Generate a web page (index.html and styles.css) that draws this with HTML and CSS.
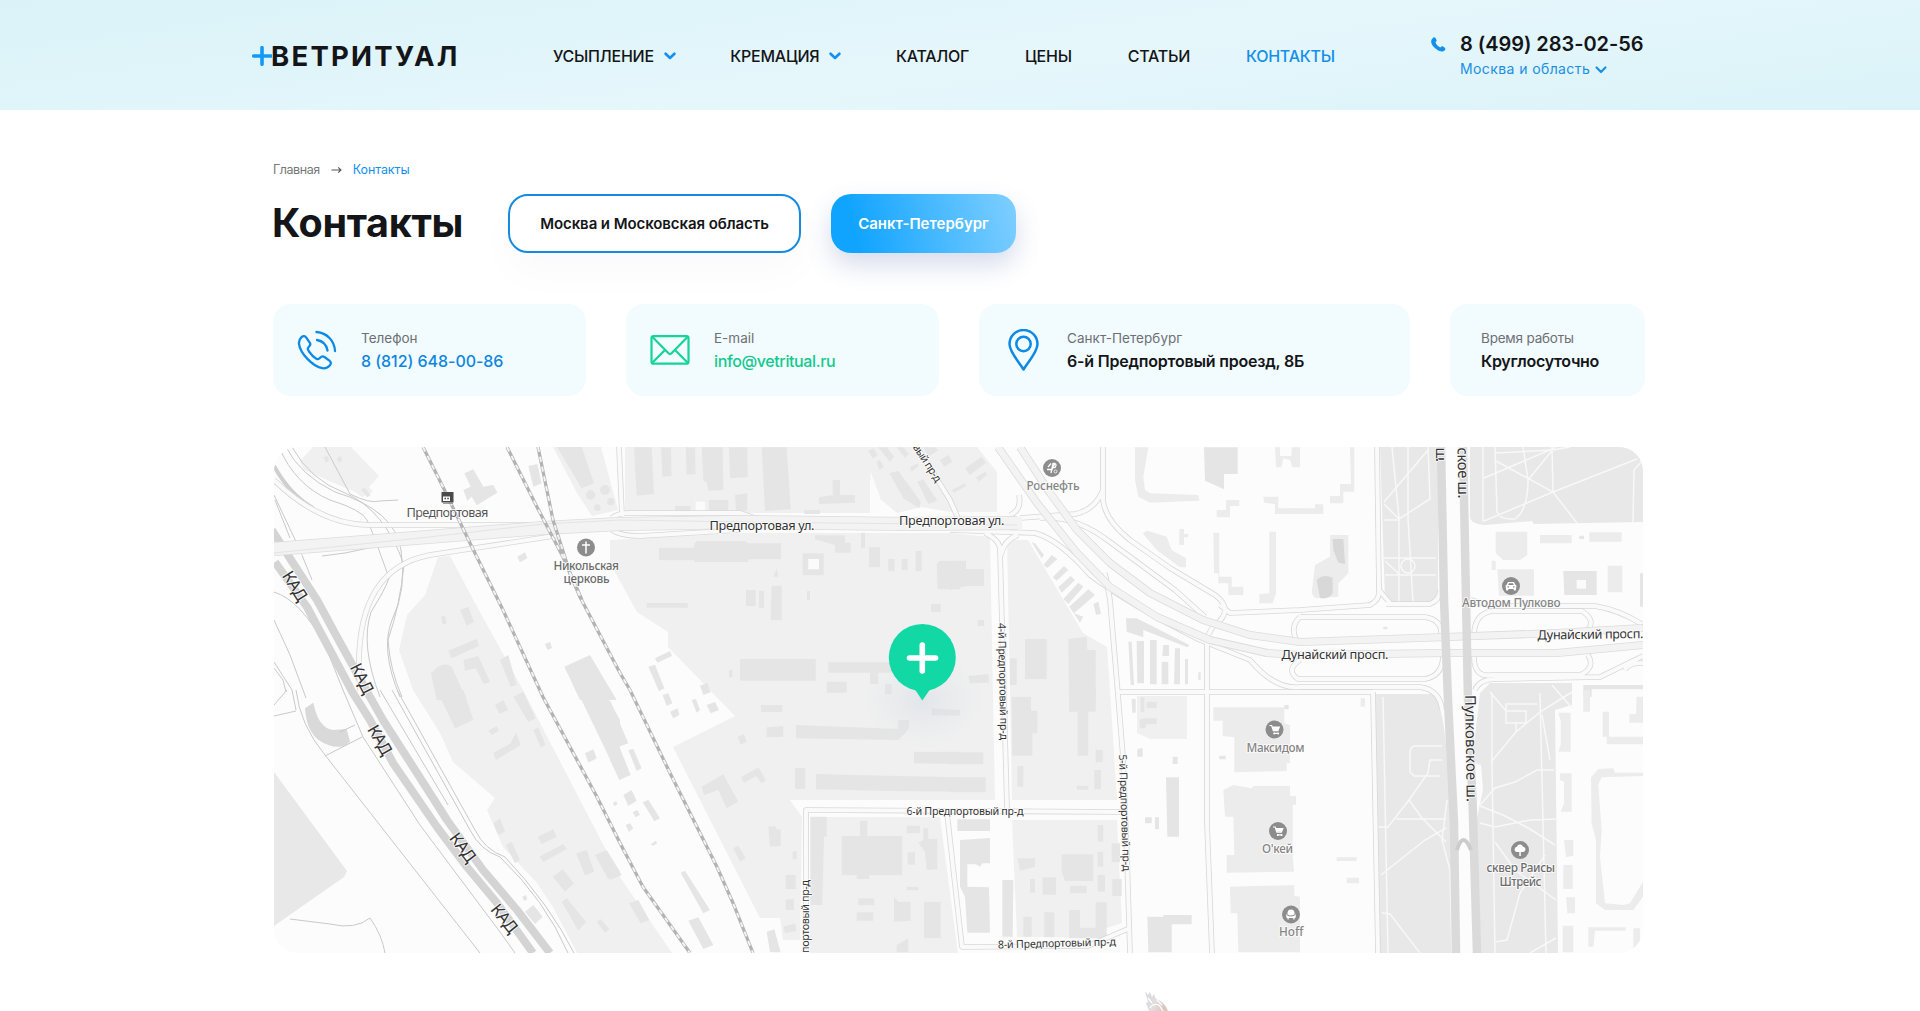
FILE: index.html
```html
<!DOCTYPE html>
<html lang="ru">
<head>
<meta charset="utf-8">
<title>Контакты — Ветритуал</title>
<link rel="stylesheet" href="styles.css">
</head>
<body>
<header class="header">
  <div class="header-inner">
    <a class="logo"><svg width="20" height="20" viewBox="0 0 20 20"><path d="M10 1.7V18.3M1.7 10H20" stroke="#1199f7" stroke-width="3.6" stroke-linecap="round"/></svg><span class="logo-text">ВЕТРИТУАЛ</span></a>
    <nav class="nav">
      <a class="has-menu">УСЫПЛЕНИЕ<svg class="chev" viewBox="0 0 12 8"><path d="M1.6 1.7 6 6 10.4 1.7"/></svg></a>
      <a class="has-menu">КРЕМАЦИЯ<svg class="chev" viewBox="0 0 12 8"><path d="M1.6 1.7 6 6 10.4 1.7"/></svg></a>
      <a>КАТАЛОГ</a>
      <a>ЦЕНЫ</a>
      <a>СТАТЬИ</a>
      <a class="active">КОНТАКТЫ</a>
    </nav>
    <div class="phone">
      <svg class="phone-icon" viewBox="0 0 15 15"><path d="M2.2.8C3.4-.2 4.300.5 5.300 2.400c.6 1.200.4 1.700-.8 2.900C5.200 7.600 7 9.500 9.300 10.500c1.200-1.300 1.900-1.500 3-.8 1.900 1.100 2.700 2 1.600 3.300-1.600 2-4.200 2.100-7.400.100C2.300 10.400-.2 7 .2 4.200.4 2.600 1 1.800 2.200.8Z" fill="#1490ea"/></svg>
      <div class="phone-body">
        <div class="phone-num">8 (499) 283-02-56</div>
        <div class="phone-city">Москва и область<svg class="chev small" viewBox="0 0 12 8"><path d="M1.600 1.500 6 6 10.400 1.500"/></svg></div>
      </div>
    </div>
  </div>
</header>
<main class="main">
  <div class="crumbs"><span class="crumb-home">Главная</span><svg width="11" height="8" viewBox="0 0 11 8"><path d="M.5 4H10M7.200 1.300 10 4 7.200 6.700" fill="none" stroke="#555" stroke-width="1.100"/></svg><span class="crumb-cur">Контакты</span></div>
  <div class="title-row">
    <h1>Контакты</h1>
    <button class="btn outline">Москва и Московская область</button>
    <button class="btn filled">Санкт-Петербург</button>
  </div>
  <section class="cards">
    <div class="card c1">
      <svg width="40" height="40" viewBox="0 0 40 40" fill="none" stroke="#0d8ae6" stroke-width="2.300" stroke-linecap="round" stroke-linejoin="round"><path d="M4.500 7.200C6.200 5.500 8 5.800 9.300 7.600l3.600 5.200c.9 1.400.4 2.500-.8 3.700-2 2-1.600 2.700 0 5.200 2 3 4.500 5.500 7.200 7 1.600.9 2.400.6 3.900-1 1.400-1.500 2.700-1.800 4.200-.7l5 3.700c1.900 1.500 1.900 3 .4 4.700-1.800 2.300-4.300 3.300-7.500 2.800C15.500 36.500 3.200 23.200 2 13.800c-.3-2.900.8-5 2.500-6.600Z"/><path d="M19.500 2C30 3 37.500 10.500 38 21M20 10c5.700 1 9.500 4.800 10.500 10.500"/></svg>
      <div class="card-text"><div class="label">Телефон</div><div class="value blue">8 (812) 648-00-86</div></div>
    </div>
    <div class="card c2">
      <svg width="40" height="30" viewBox="0 0 40 30" fill="none" stroke="#15d39a" stroke-width="2.200" stroke-linejoin="round"><rect x="1.500" y="1.200" width="37" height="27.500" rx="2"/><path d="M2.500 2 18.500 18.300q1.500 1.500 3 0L37.500 2M2.500 27.500 15 15M37.500 27.500 25 15"/></svg>
      <div class="card-text"><div class="label">E-mail</div><div class="value green">info@vetritual.ru</div></div>
    </div>
    <div class="card c3">
      <svg width="31" height="42" viewBox="0 0 31 42" fill="none" stroke="#0d8ae6" stroke-width="2.500" stroke-linejoin="round"><path d="M15.500 40.500C10 31.500 1.500 23 1.500 15a14 14 0 0 1 28 0c0 8-8.500 16.500-14 25.500Z"/><circle cx="15.500" cy="15" r="7.200"/></svg>
      <div class="card-text"><div class="label">Санкт-Петербург</div><div class="value">6-й Предпортовый проезд, 8Б</div></div>
    </div>
    <div class="card c4">
      <div class="card-text"><div class="label">Время работы</div><div class="value">Круглосуточно</div></div>
    </div>
  </section>
  <svg class="map" viewBox="274 447 1369 506">
    <defs>
      <g id="cart"><circle r="9" class="poi"/><path d="M-5-4h2.200l1.600 5.200h4.600l1.400-3.700h-6.600M-1 3.800h5" fill="none" stroke="#fff" stroke-width="1.200"/><path d="M-2.300-2.500h7L3.500.800h-4.800Z" fill="#fff"/><circle cx="-.2" cy="4" r="1" fill="#fff"/><circle cx="3.600" cy="4" r="1" fill="#fff"/></g>
      <radialGradient id="haze"><stop offset="0" stop-color="#d3dae4" stop-opacity=".5"/><stop offset="1" stop-color="#dfe4ea" stop-opacity="0"/></radialGradient>
    </defs>
    <rect x="274" y="447" width="1369" height="506" fill="#fcfcfc"/>
    <!-- land parcels -->
    <g class="land">
      <path d="M438 557 450 556 475 603 523 690 620 877 672 953H577L553 907 537 883 503 847 487 810 495 798 453 762 440 733 413 690 399 650 407 615 425 595Z"/>
      <path d="M313 447H351L379 476 369 487 373 492 362 497 355 492 304 470 300 461Z"/>
      <path d="M553 447H601L618 510 592 516 577 493Z"/>
      <path d="M625 447H870V513H625Z"/>
      <path d="M863 447H977L997 472V512H950L922 507 897 513 873 493Z"/>
      <path d="M610 540 745 533 950 533 990 537 995 800H790L802 817 800 940H783L780 918H760L673 747 735 716 668 647V632L637 612 610 563Z"/>
      <path d="M1007 540H1028L1083 633 1107 647 1110 690 1117 800H1012Z"/>
      <path d="M810 817H940L958 953H810ZM1012 820H1117L1122 923 1080 937H1017ZM1137 696H1187V739H1150L1137 733Z"/>
    </g>
    <g class="park">
      <path d="M274 772 347 871 344 877 274 926Z"/>
      <path d="M1380 447H1438V596Q1436 602 1428 602H1385Z"/>
      <path d="M1470 447H1643V522L1534 524 1532 521 1485 525Q1471 524 1470 517Z"/>
      <path d="M1374 694H1433Q1444 705 1447 760L1454 823 1453 953H1380Z"/>
      <path d="M1480 693 1490 683H1572V705L1555 710 1558 953H1480L1476 823 1483 790 1481 765 1472 762Z"/>
    </g>
    <!-- buildings, first row of blocks -->
    <g class="bld" transform="translate(270 440) scale(.33333)">
      <path d="M583 100 610 88 640 140 670 135 682 158 620 196 605 170 592 182 580 150 602 140ZM775 78 802 72 815 130 790 140ZM860 20H935L972 130 935 145ZM742 350 765 337 772 355 750 367ZM570 510 595 500 612 545 590 557ZM513 530 525 527 530 550 518 554ZM535 632 620 597 627 618 545 655ZM580 660 625 648 660 725 642 733 617 685 585 692ZM690 660 715 645 740 735 722 740ZM883 680 960 645 1040 780H930ZM483 700Q515 660 545 680L590 780H500ZM825 612 840 606 846 624 832 630ZM272 148 285 144 302 165 292 172ZM160 52 172 48 178 62 168 68ZM200 55 212 48 217 62 205 68Z"/>
      <g><circle cx="1005" cy="150" r="15"/><circle cx="1022" cy="185" r="11"/><circle cx="962" cy="165" r="14"/><circle cx="982" cy="203" r="10"/></g>
    </g>
    <g class="bld" transform="translate(610 440) scale(.33333)">
      <path d="M72 22H125L132 162 80 167ZM153 22H183L185 108 157 110ZM227 22H255L257 102 230 104ZM275 22H338L340 150 295 152 290 125 280 123ZM357 22H412L413 112 360 115ZM455 22H530L542 208 465 213ZM195 198H242V216H195ZM297 180H355V216H297ZM375 165 412 160V212H378ZM668 120H690V165H735V188L627 192V172L668 165ZM583 210H630V222H583Z"/>
      <path d="M147 323H253V310L262 303H405L415 310H513V358H415V366H253V361H147ZM615 286H705V308H722V338H675V315L615 298ZM578 340H641V406H578ZM753 278H765V325H753ZM777 322H810V382H777ZM835 357H854V394H835ZM875 357H893V391H875ZM917 333H935V394H917ZM980 372 990 362H1050V448H983ZM408 450H437V498H408ZM447 452H462V503H447ZM485 437H515V541H482ZM490 410 500 385 505 410ZM591 453H600V480H591ZM110 489H233V503H110ZM963 492H992V516H963ZM390 657H617V722H390ZM655 667H860V698H805V732H780V698H655ZM650 725H710V758H650ZM825 732H845V763H825ZM357 690H367V712H357ZM135 655 180 633 186 648 142 668ZM115 680 135 674 163 745 147 754ZM270 737 292 728 302 757 280 765Z"/>
      <path d="M775 32 790 25 803 45 788 56ZM800 65 810 60 822 82 808 90ZM805 22H830L853 50 840 66ZM860 22H880L897 42 885 53ZM838 100 865 92 932 185 928 205 880 175ZM922 125 940 118 982 182 955 192ZM900 82 922 70 927 78 905 95ZM990 60 1015 45 1027 65 1002 80ZM940 22H975L985 30 955 50Z"/>
      <path class="hole" d="M595 357H627V388H595ZM257 185H285V216H257ZM782 95 810 170 813 220H780Z"/>
    </g>
    <g class="bld" transform="translate(950 440) scale(.33333)">
      <path d="M45 85 95 50 108 68 60 105ZM78 112 105 95 112 103 87 125ZM5 150 45 130 48 138 12 158ZM762 22H863V102H822V148L765 122ZM0 370 15 362H48V387H102V438H50L0 450Z"/>
      <path class="pale" d="M555 22H595L580 110 585 150 600 160 745 165 748 182 600 188 565 170 555 120ZM975 22H990V48H1025V22H1050V82H1028L1020 60 1000 55 995 82H978ZM800 210H828V180H868V198H840V232H800ZM940 170H985V205H1050V222H975V192L942 188ZM578 280 592 272 650 290 665 330 708 355V382H690L620 330ZM688 267H702V282H715V292H702V315H688ZM790 278H808V410H845V440H880V465H835V430H805V400H792ZM958 275H978V460L968 490H928V462L958 460Z"/>
      <path d="M245 307 255 310 282 345 275 355ZM280 375 305 345 322 357 292 384ZM308 412 342 378 355 390 320 422ZM325 442 362 408 375 420 335 458ZM340 477 385 428 400 440 355 492ZM358 500 415 448 435 465 372 520 400 530 390 548ZM430 492 445 485 453 522 438 524ZM83 540H102V558H83ZM225 597H290V718H225ZM355 597 410 590 412 630H437V780H357ZM180 655H200V735H180ZM55 708 115 702 117 728 60 730ZM528 535H560L718 615 712 622 580 570V592L530 575ZM535 605H545L552 735H542ZM560 603H582V730H562ZM600 600H620V733H600ZM640 615H657V648H637ZM635 665H655V733H635ZM675 625H690V733H672ZM705 657H714V733H705ZM745 697H752V720H745Z"/>
    </g>
    <g class="bld" transform="translate(1290 440) scale(.33333)">
      <path class="pale" d="M5 35 22 22V80H5ZM180 22H193V155H160V190H120V168H150V132H183ZM0 205H75V193H100V222H0ZM120 285H175V400L145 430V470L75 475 65 460 75 375 120 350ZM617 275H712V345L690 360H640L617 340ZM750 285H845V310H750ZM898 277H995V305H898ZM605 362H617V390H605ZM622 388H732V467H627ZM953 377H997V457H953Z"/>
      <path d="M820 393H920V465H823Z"/>
      <path d="M128 297H160L163 340 165 372 145 368 130 330ZM80 420Q100 400 128 413V460Q115 480 90 474Z" fill="#d8d8d8"/>
      <path class="hole" d="M860 420H888V446H860Z"/>
      <path d="M868 287H882V297H868ZM280 560H292V568H280ZM1050 400H1059V500H1050ZM880 735H1059V748H905V770H880Z"/>
    </g>
    <!-- buildings, second row of blocks -->
    <g class="bld" transform="translate(270 690) scale(.33333)">
      <path d="M105 55 130 38Q145 115 190 120L230 117 240 155Q215 180 175 165 110 145 105 55Z" fill="#d9d9d9"/>
      <path d="M500 0H580L610 90 555 115ZM675 45 700 30 715 60 688 72ZM730 20 760 5 797 85 775 96ZM655 122 680 108 687 122 665 135ZM790 120 805 112 827 165 812 172ZM670 188 722 160 738 127 752 165 678 210ZM670 400 690 385 705 425 685 435ZM707 465 725 455 750 510 735 520ZM803 440 850 418 860 440 815 462ZM808 500 880 462 890 477 820 516ZM918 490 950 480 973 545 945 556ZM975 495 1010 480 1050 545 1015 568ZM848 560 878 538 912 580 885 605ZM875 635 890 625 948 695 925 722ZM765 665 790 645 818 680 795 702ZM980 695 993 688 1018 718 1005 728ZM920 0H1000L1050 90V270ZM945 190 970 178 980 205 955 218ZM757 620 768 615 772 627 762 633ZM1028 340 1038 333 1043 343 1033 348Z"/>
    </g>
    <g class="bld" transform="translate(610 690) scale(.33333)">
      <path d="M0 30 55 160 0 180ZM0 180 30 175 62 255 28 270 0 210ZM55 180 70 177 95 235 80 243ZM158 15 175 10 187 40 170 48ZM180 65 203 55 208 75 190 85ZM245 30 258 27 270 60 260 68ZM290 45 315 36 327 60 302 70ZM383 140 402 133 410 155 392 164ZM453 45H517V66H453ZM470 112 520 108V140L470 142ZM558 105 865 117V90H897V115L880 135 865 150 558 145ZM555 233H586V297H555ZM618 252 730 255 1050 262V305L840 303 618 298ZM912 185H1050V222L912 220ZM965 55 1050 60V77L965 76ZM275 290 340 253 385 335 350 355 325 300 282 315ZM393 262 445 232 468 270 455 280 438 258 402 278ZM475 410 495 408 500 418H512V468L480 470ZM370 475 385 467 407 505 390 515ZM527 555H557V597H527ZM527 628H552V660H527ZM520 710 555 700 560 722 525 730ZM548 484H560V508H548Z"/>
      <path d="M602 380H650V440H642L637 645H602ZM695 438H750V392H772V438H877V556H778V567H740V556H695ZM890 407H930V430H890ZM893 487H915V524H893ZM940 415H955V447H982V538L950 540 945 485 925 458 940 450ZM852 620 865 635H902V692L852 695ZM745 625H793V646H745ZM740 667H790V692H740ZM942 635H992V745H942ZM860 765 895 745V787H860ZM890 590H925V601H890ZM235 692 265 682 310 765 280 777ZM212 548 225 542 300 660 280 670ZM98 337 115 329 150 385 133 394ZM40 315 65 300 80 332 55 348ZM57 640 85 630 118 690 92 700ZM68 367 82 360 90 374 77 382ZM47 405 60 400 70 415 57 426ZM470 725 493 718 512 787H480ZM0 500 35 555 0 570ZM122 463 137 452 142 460 130 467Z"/>
    </g>
    <g class="bld" transform="translate(950 690) scale(.33333)">
      <path d="M185 20H243V62H262V130H247V197H187ZM357 0H437V65H415V197H383V65H357ZM202 228H220V290H202ZM437 180H458V217H437ZM433 240H453V298H433ZM380 287H415V299H380ZM0 187H100V223H0ZM0 262H107V307H0ZM22 388H120V423H22ZM30 450 120 444V520H97L90 530 78 523H52V590L117 592 120 728H52L45 620 30 590ZM157 570H190L188 740H157ZM203 505H255V530L210 542ZM335 493H430V573H345L335 545ZM240 567H255V608H240ZM278 562H318V614H278ZM360 587H410V610H360ZM443 405H460V455H443ZM443 485H460V530H443ZM443 555H465V605H443ZM485 460H510V517H485ZM487 567H515V618H487ZM220 680H245V740H220ZM283 667H313V742H283ZM357 660H390V713H437V637H470V745H357ZM570 175H578V200H562V178ZM668 200H683V222H668ZM648 262H687V440H652ZM585 382H605V400H585ZM615 382H627V418H615ZM545 27H557V68H547ZM572 22H583V67H572ZM590 35H620V55H590ZM568 88 590 85H620V103H590L585 115H570ZM592 680H640V675H725V703H665V787H595ZM808 197H827V208H808ZM1003 45H1016V58H1003Z"/>
      <path class="pale" d="M790 52H1003V100L1020 105V220H1010V243L853 247V142L818 138V92H790ZM820 300 850 285 905 295 910 288H1020V318H1038V345H1028V495L1032 545 830 548V495H853L850 380H825ZM840 590 1033 585V617L1050 620V787H865L862 670H842Z"/>
    </g>
    <g class="bld" transform="translate(1290 690) scale(.33333)">
      <path class="pale" d="M938 65H957V140H1059V163H950V140H938ZM1040 20H1059V98H1018V72H1038ZM805 68H842V185H805L812 165V92ZM810 250H845V365H812L822 340V275L810 270ZM822 450H850V497L828 502ZM820 525H848V597H820ZM828 622H855V670H832ZM818 707H850V787H818ZM140 502H200V513H140ZM170 563H207V580H170ZM880 0H900V65H880ZM903 262 925 237 970 235 975 248H1059V258L935 262 925 285 935 420 930 500 945 640 1000 645 1020 640 1059 575V620L1030 660H945L918 640V450L905 400ZM895 712H1007V722H915L910 770H895ZM1030 715H1050V770L1030 777ZM212 25H225V50H212Z"/>
    </g>
    <!-- park paths -->
    <g class="trail">
      <path d="M1392 447 1399 518V602M1408 447V518L1413 602M1384 502 1428 450M1384 504 1399 519 1430 499 1428 447M1384 520H1400M1384 558H1436M1385 575H1436M1385 561 1400 575"/><circle cx="1408" cy="566" r="7"/>
      <path d="M1483 447V522M1495 447 1497 512Q1500 520 1515 519 1528 510 1528 480L1523 447M1484 478 1552 449M1496 461 1553 492 1577 523M1484 521 1553 492 1637 459M1552 447 1553 492M1495 453 1553 450 1570 447M1528 480 1555 447M1633 522 1634 470 1643 460"/>
      <path d="M1383 697 1388 953M1442 746H1414Q1410 747 1410 753V772L1414 776H1440M1442 760H1430L1428 773 1409 800 1388 827H1378M1409 800 1422 818 1446 842M1396 819H1446M1446 828 1425 840 1381 875M1382 913 1390 914 1420 953M1447 800 1442 840 1450 870 1452 953"/>
      <path d="M1492 693V765L1495 953M1540 693 1546 953M1490 692 1506 711H1526V723H1506V704H1537M1516 723V732L1491 762M1516 732 1540 712 1572 692M1552 685 1572 708M1480 805 1495 788 1515 782 1537 770H1554M1480 806 1503 815 1530 829 1555 845M1480 823 1495 827 1530 820 1556 819M1495 842 1515 870 1545 892 1556 900M1545 855 1520 893 1507 940 1495 942M1556 938 1530 953M1542 715 1550 760"/>
    </g>
    <!-- thin lines -->
    <g class="thin">
      <path d="M279 447Q295 485 330 500 362 510 367 520T389 578Q386 588 371 612 360 645 380 697M286 447Q300 475 335 492 395 510 401 550 407 590 392 620 380 650 400 697M292 447Q310 480 345 493 385 510 404 565 400 605 388 640 390 670 402 697M325 447 350 494Q370 504 380 501L398 500M322 556 345 553 378 546"/>
      <path d="M274 592Q300 600 325 645L343 690 363 737 420 825 500 932 515 953M274 620 290 655 306 698M296 690Q300 725 325 755L480 953M325 756 362 737M274 716 296 711M274 705 287 690M340 732 355 725M290 919 330 924Q355 930 370 918 382 935 385 953M274 662 292 690 296 710M274 668 283 680 286 692"/>
      <path d="M380 690 448 805M392 690 470 830Q480 850 500 857 545 900 568 953M397 690 475 830Q485 850 505 857 550 905 574 953M274 495 300 550 312 580M275 500 290 538"/>
    </g>
    <!-- ring road -->
    <g class="kad"><path d="M275 562 307 607 323 637 353 693 370 720 393 763 437 827 467 867 497 903 533 953"/><path d="M272 530 275 535 293 563 317 600 337 637 370 697 383 720 417 773 447 820 483 870 517 910 550 953"/></g>
    <path d="M274 466Q290 495 313 508" fill="none" stroke="#cfcfcf" stroke-width="4"/>
    <!-- streets -->
    <g class="st-case"><use href="#st"/></g>
    <g class="st-fill"><g id="st">
      <path d="M619 447 622 516M917 447 950 500 958 518M985 533Q1000 540 1000 550L1007 808M1018 535Q1004 540 1001 555M806 953V810L1122 812M947 813 962 947 1088 946 1130 928M1105 573 1110 600 1118 695 1123 757 1127 857 1130 953M1118 692H1373M1207 640 1207 823 1212 953M1377 447 1379 590 1390 603M1373 692 1378 953"/>
      <path d="M1103 447V500Q1105 520 1130 540L1170 568 1215 595Q1235 610 1215 625 1207 632 1207 645M1103 490Q1095 510 1075 514L1020 518M1019 495Q1022 510 1010 515"/>
      <path d="M1040 518Q1075 515 1110 542L1175 590 1205 617M950 530 1035 533Q1060 540 1090 575 1130 605 1200 640L1250 660Q1275 690 1300 687H1420Q1440 690 1442 710M1220 605 1230 613 1300 610 1370 605Q1380 600 1379 590"/>
      <path d="M1300 617H1425Q1442 620 1441 634M1300 617Q1290 626 1296 639M1300 660Q1285 670 1298 679H1425Q1442 676 1443 657M1474 636Q1474 614 1492 611H1582Q1596 620 1588 630M1474 657Q1474 678 1492 675H1580Q1596 668 1588 655M1386 604H1430Q1440 600 1440 590M1471 600 1490 606H1595Q1620 610 1643 625M1475 690Q1480 678 1500 679L1600 677 1643 656M1625 670Q1628 663 1643 663"/>
      <path d="M274 480Q320 525 370 525H540M360 690Q350 570 430 555L560 535M612 530Q620 536 640 536L740 530M612 518Q617 513 630 513H740L760 520"/>
    </g></g>
    <g class="hw-case wide"><path d="M274 549 377 541 543 528 620 524 743 522 910 524 1017 523"/></g>
    <g class="hw-fill wide"><path d="M274 549 377 541 543 528 620 524 743 522 910 524 1022 523"/></g>
    <path d="M274 553 420 538 543 524 620 520 742 522 1017 525" fill="none" stroke="#dfdfdf" stroke-width=".8"/>
    <g class="hw-case"><path d="M998 447 1037 503 1077 553 1110 587 1157 617 1210 640 1267 653 1300 655 1447 653 1557 653 1643 645"/><path d="M1020 447 1050 493 1077 530 1110 563 1150 593 1203 620 1250 635 1300 642 1447 637 1557 633 1643 628"/></g>
    <g class="hw-fill"><path d="M998 447 1037 503 1077 553 1110 587 1157 617 1210 640 1267 653 1300 655 1447 653 1557 653 1643 645"/><path d="M1020 447 1050 493 1077 530 1110 563 1150 593 1203 620 1250 635 1300 642 1447 637 1557 633 1643 628"/></g>
    <g class="kad soft"><path d="M1441 447 1444 600 1448 700 1454 823 1456 953"/><path d="M1463 447 1468 700 1472.500 800 1477 953"/></g>
    <path d="M1457 850Q1463 830 1471 850" fill="none" stroke="#ccc" stroke-width="4"/>
    <!-- railways -->
    <g class="rail"><path d="M423 447 443 487 470 543 503 610 543 697 597 797 620 843 643 887 690 953"/><path d="M507 447 537 507 563 557 580 597 620 673 630 690 670 773 717 867 733 903 753 953"/><path d="M538 447 553 520 570 573 582 600"/></g>
    <g class="rail ties"><path d="M423 447 443 487 470 543 503 610 543 697 597 797 620 843 643 887 690 953"/><path d="M507 447 537 507 563 557 580 597 620 673 630 690 670 773 717 867 733 903 753 953"/><path d="M538 447 553 520 570 573 582 600"/></g>
    <!-- street names -->
    <g class="name">
      <text x="406.500" y="517" textLength="82" class="dim">Предпортовая</text>
      <text x="709.500" y="530" textLength="105">Предпортовая ул.</text>
      <text x="899" y="524.500" textLength="105.500">Предпортовая ул.</text>
      <text x="1281.500" y="658.500" textLength="107">Дунайский просп.</text>
      <text x="1537.500" y="639.500" textLength="106" transform="rotate(-.8 1537 639)">Дунайский просп.</text>
      <g class="sm">
        <text x="906.500" y="814.500" textLength="117">6-й Предпортовый пр-д</text>
        <text x="998" y="948.500" textLength="118" transform="rotate(-1.500 998 948)">8-й Предпортовый пр-д</text>
        <text textLength="117" transform="translate(998 623) rotate(88.800)">4-й Предпортовый пр-д</text>
        <text textLength="117" transform="translate(1119 754.500) rotate(88)">5-й Предпортовый пр-д</text>
        <text textLength="73" transform="translate(808.500 953) rotate(-90)">портовый пр-д</text>
        <text textLength="43" transform="translate(912.500 447) rotate(57)">вый пр-д</text>
      </g>
      <g class="lg">
        <text textLength="107" transform="translate(1465 695) rotate(89)">Пулковское ш.</text>
        <text textLength="51" transform="translate(1457.500 447.500) rotate(89)">ское ш.</text>
        <text textLength="14.500" transform="translate(1436 447.500) rotate(90)">ш.</text>
      </g>
      <g class="kl">
        <text x="-16" y="6" textLength="32" transform="translate(295 586) rotate(58)">КАД</text>
        <text x="-16" y="6" textLength="32" transform="translate(362 678.500) rotate(63)">КАД</text>
        <text x="-16" y="6" textLength="32" transform="translate(380 740) rotate(60)">КАД</text>
        <text x="-16" y="6" textLength="32" transform="translate(463 847.500) rotate(53)">КАД</text>
        <text x="-16" y="6" textLength="32" transform="translate(504.500 918.500) rotate(51)">КАД</text>
      </g>
    </g>
    <g class="place">
      <text x="553.500" y="569.500" textLength="65.500" class="dark">Никольская</text>
      <text x="563.500" y="582.500" textLength="46" class="dark">церковь</text>
      <text x="1026.500" y="489.500" textLength="53">Роснефть</text>
      <text x="1462" y="607" textLength="98.500">Автодом Пулково</text>
      <text x="1246.500" y="751.500" textLength="58">Максидом</text>
      <text x="1262" y="852.500" textLength="31">О'кей</text>
      <text x="1279" y="936" textLength="24.500">Hoff</text>
      <text x="1486.500" y="872" textLength="68.500" class="dark">сквер Раисы</text>
      <text x="1499.500" y="885.500" textLength="42" class="dark">Штрейс</text>
    </g>
    <!-- points of interest -->
    <g transform="translate(586 547.500)"><circle r="9" class="poi"/><path d="M0-6V6M-4-2.500H4" stroke="#fff" stroke-width="1.500"/></g>
    <g transform="translate(1052 468)"><circle r="9" class="poi"/><path d="M-5 1.500H0L3-5M-4-1-1-4.500M-1 5 1-4.500H3Q5-3.500 3-.500H0" stroke="#fff" stroke-width="1.300" fill="none"/><circle cx="3.500" cy="3.500" r="1.500" fill="none" stroke="#fff" stroke-width=".8"/></g>
    <g transform="translate(1511 586)"><circle r="9" class="poi"/><path d="M-5.500-.5-4.500-1-3-4H3L4.500-1 5.500-.5 4.800 4.500H3L2.500 3H-2.500L-3 4.500H-4.800Z" fill="#fff"/><path d="M-2.800-1-2-2.800H2L2.800-1ZM-3.500.3H-2V1.500H-3.500ZM2 .3H3.500V1.500H2Z" fill="#888"/></g>
    <use href="#cart" x="1274.500" y="729.500"/><use href="#cart" x="1278" y="831"/>
    <g transform="translate(1291 914.500)"><circle r="9" class="poi"/><path d="M-3.500 0Q-4-5 0-5T3.500 0Q0 2-3.500 0M-5-1Q-4 2 0 2T5-1L4.500 3.500H-4.500ZM-3.500 3.500h1.200v1.500h-1.200ZM2.300 3.500h1.200v1.500h-1.200Z" fill="#fff"/></g>
    <g transform="translate(1520 850)"><circle r="9" class="poi"/><path d="M-.7 6V2Q-5.500 2.500-5.500-.5-5.300-3-3-3.200-2.500-6 .5-5.500 2.500-5 2.800-3.500 5.500-3 5.500-.5 5 2.500.8 2V6Z" fill="#fff"/></g>
    <g transform="translate(447 497.500)"><rect x="-5.500" y="-5.500" width="12" height="10.500" fill="#4a4a4a"/><path d="M-4 3.500V-1H3V3.500Z" fill="#fff"/><path d="M-2.500 .2h1.500v1.500H-2.500ZM.3.200H1.800V1.700H.3Z" fill="#444"/><path d="M-4 5.800H6" stroke="#888" stroke-width="1"/></g>
    <!-- office marker -->
    <ellipse cx="923" cy="700" rx="62" ry="48" fill="url(#haze)"/>
    <path d="M914 688 922.300 700.500 931 688Z" fill="#11d8a5"/>
    <circle cx="922.300" cy="657.500" r="33.500" fill="#11d8a5"/>
    <path d="M922.300 645V671M909.500 658H935.500" stroke="#fff" stroke-width="5.600" stroke-linecap="round"/>
  </svg>
  <svg class="fur" viewBox="0 0 26 20"><defs><linearGradient id="fg" x1="0" x2="1" y2=".4"><stop offset="0" stop-color="#d5d8e0"/><stop offset=".6" stop-color="#e3dedf"/><stop offset="1" stop-color="#d8c6bf"/></linearGradient></defs><path d="M0 0 3 4 5 1 7 6 9 3 11 8Q19 10 23 20H4L1 12 3 11Z" fill="url(#fg)"/><path d="M5 17Q8 12 14 14L18 20M3 7 7 12M12 9 17 14" stroke="#fff" fill="none" stroke-width="1.300"/></svg>
</main>
</body>
</html>
```
FILE: styles.css
```css
* { box-sizing: border-box; }
body {
  margin: 0;
  height: 1011px;
  overflow: hidden;
  background: #fff;
  color: #141518;
  font-family: Inter, "Liberation Sans", sans-serif;
}
.header {
  height: 110px;
  background: linear-gradient(172deg, #daf3f9 0%, #e1f5fa 35%, #e6f7fb 52%, #e1f5fa 72%, #daf3f9 100%);
}
.header-inner {
  display: flex;
  align-items: center;
  width: 1392px;
  height: 110px;
  margin-left: 252px;
}
.logo { display: flex; align-items: center; width: 301px; padding-top: 2px; }
.logo-text { font-size: 27.500px; font-weight: 700; letter-spacing: 2.250px; line-height: 30px; margin-left: -1px; }
.nav { display: flex; width: 878px; font-size: 16px; font-weight: 500; line-height: 20px; gap: 56px; padding-top: 2px; white-space: nowrap; }
.nav a { display: flex; align-items: center; letter-spacing: -.25px; }
.nav .has-menu { margin-right: -1.500px; }
.nav .active { color: #1490ea; }
.chev { width: 12px; height: 8px; margin-left: 10px; margin-top: -1px; fill: none; stroke: #1490f5; stroke-width: 2.600; stroke-linecap: round; stroke-linejoin: round; }
.chev.small { margin: 1px 0 0 5px; stroke: #1a8fe2; stroke-width: 2.200; }
.phone { display: flex; }
.phone-icon { width: 15px; height: 15px; margin: 5px 14px 0 0; }
.phone-num { font-size: 20px; font-weight: 600; line-height: 24px; letter-spacing: -.05px; white-space: nowrap; }
.phone-city { display: flex; align-items: center; margin-top: 4px; font-size: 14px; line-height: 18px; letter-spacing: .4px; color: #1a8fe2; white-space: nowrap; }
.main { margin-left: 273px; width: 1372px; }
.crumbs { display: flex; align-items: center; gap: 11px; padding-top: 52px; font-size: 12.500px; line-height: 16px; }
.crumb-home { color: #777; letter-spacing: -.45px; }
.crumb-cur { color: #1490ea; letter-spacing: -.1px; }
.title-row { display: flex; align-items: center; margin-top: 16px; height: 59px; }
h1 { margin: 0 0 0 -1px; width: 236px; font-size: 39.500px; font-weight: 700; line-height: 48px; letter-spacing: -.3px; padding-bottom: 1px; }
.btn { height: 59px; border-radius: 20px; font-family: inherit; font-size: 15px; font-weight: 600; letter-spacing: -.08px; padding: 0; white-space: nowrap; }
.outline { width: 293px; border: 2px solid #148be0; background: #fff; color: #141518; box-shadow: 0 20px 40px rgba(40, 60, 140, .025); }
.filled { width: 185px; margin-left: 30px; border: 0; letter-spacing: 0; background: linear-gradient(75deg, #11a4ff 15%, #80cfff 100%); color: #fff; box-shadow: 0 12px 26px rgba(50, 80, 160, .2); }
.cards { display: flex; margin-top: 51px; gap: 40px; }
.card { display: flex; align-items: center; height: 92px; border-radius: 18px; background: #f2fbfe; white-space: nowrap; }
.c1, .c2 { width: 313px; padding-left: 24px; gap: 24px; }
.c3 { width: 431px; padding-left: 29px; gap: 28px; }
.c4 { width: 195px; padding-left: 31px; }
.label { font-size: 13.500px; line-height: 18px; color: #6d7074; letter-spacing: 0; }
.c3 .label { letter-spacing: .05px; }
.c4 .label { letter-spacing: -.2px; }
.value { margin-top: 4px; padding-bottom: 1px; font-size: 16px; font-weight: 600; line-height: 20px; letter-spacing: -.2px; }
.c4 .value { letter-spacing: -.3px; }
.value.blue { color: #0d86de; font-weight: 500; letter-spacing: -.05px; }
.value.green { color: #12c98f; font-weight: 500; letter-spacing: -.38px; }
.map { display: block; width: 1369px; height: 506px; margin: 51px 0 0 1px; border-radius: 24px; }
.fur { display: block; width: 26px; height: 20px; margin: 38px 0 0 872px; }

.land { fill: #f0f0f0; }
.park { fill: #e8e8e8; }
.bld { fill: #e5e5e5; }
.pale { fill: #ececec; }
.hole { fill: #fbfbfb; }
.trail, .thin, .kad, .rail { fill: none; }
.trail { stroke: #f8f8f8; stroke-width: 1.500; }
.thin { stroke: #c9c9c9; stroke-width: 1; }
.kad { stroke: #d4d4d4; stroke-width: 8; stroke-linejoin: round; }
.kad.soft { stroke: #dadada; stroke-width: 8.500; }
.st-case, .st-fill, .hw-case, .hw-fill { fill: none; stroke-linejoin: round; }
.st-case { stroke: #d8d8d8; stroke-width: 5.600; }
.st-fill { stroke: #fafafa; stroke-width: 4; }
.hw-case { stroke: #dcdcdc; stroke-width: 8; }
.hw-fill { stroke: #f3f3f3; stroke-width: 6.400; }
.hw-case.wide { stroke-width: 14; }
.hw-fill.wide { stroke-width: 12.400; }
.rail { stroke: #b3b3b3; stroke-width: 3.300; }
.rail.ties { stroke: #f4f4f4; stroke-width: 1.900; stroke-dasharray: 5 5; }
.name, .place { font-family: "Noto Sans", "Open Sans", sans-serif; paint-order: stroke; stroke: rgba(252, 252, 252, .85); stroke-width: 2px; stroke-linejoin: round; }
.name { font-size: 12.800px; fill: #333; }
.name .dim { fill: #555; }
.name .sm { font-size: 10.800px; }
.name .lg { font-size: 15px; }
.name .kl { font-size: 17px; }
.place { font-size: 11.800px; font-weight: 500; fill: #858585; }
.place .dark { fill: #6c6c6c; }
.poi { fill: #8c8c8c; }
```
